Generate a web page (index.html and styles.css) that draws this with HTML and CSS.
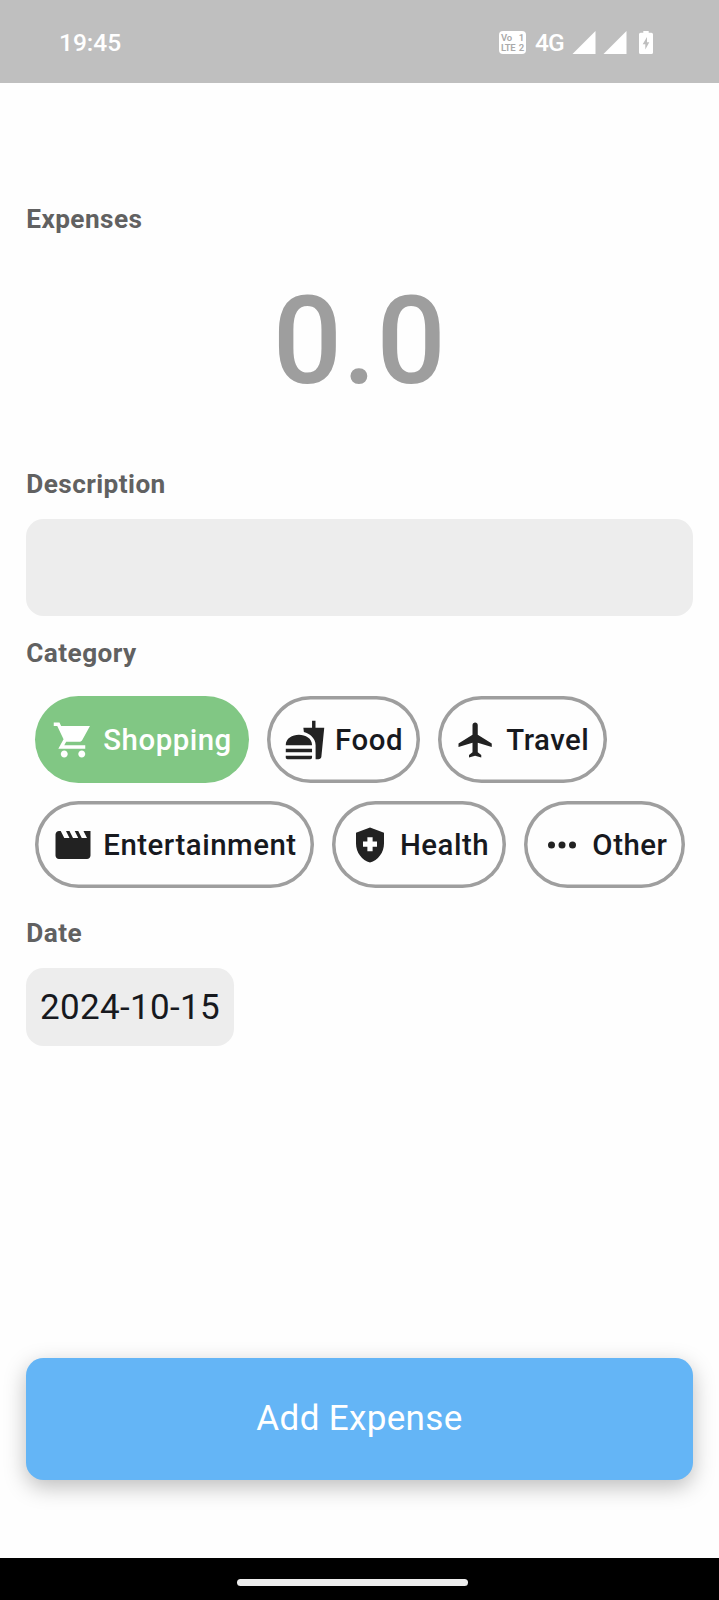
FILE: index.html
```html
<!DOCTYPE html>
<html lang="en">
<head>
<meta charset="utf-8">
<title>Add Expense</title>
<link rel="stylesheet" href="styles.css">
</head>
<body>
<header class="status">
  <span class="clock">19:45</span>
  <div class="indicators">
    <div class="volte"><span>Vo</span><span>1</span><span>LTE</span><span>2</span></div>
    <span class="network">4G</span>
    <svg class="signal" viewBox="0 0 24 24"><path d="M0 24 24 0V24z"/></svg>
    <svg class="signal second" viewBox="0 0 24 24"><path d="M0 24 24 0V24z"/></svg>
    <svg class="battery" viewBox="0 0 14 23"><path fill-rule="evenodd" d="M4.3 0H9.7V1.7H12.4Q14 1.7 14 3.3V21.4Q14 23 12.4 23H1.6Q0 23 0 21.4V3.3Q0 1.7 1.6 1.7H4.3zM8 6 3.7 13.2H6.3V18.6L10.3 11.2H8z"/></svg>
  </div>
</header>
<main class="form">
  <h2 class="label">Expenses</h2>
  <div class="amount">0.0</div>
  <h2 class="label description-label">Description</h2>
  <div class="field"></div>
  <h2 class="label category-label">Category</h2>
  <div class="chips">
    <div class="chip selected"><svg class="icon" viewBox="0 0 24 24"><path d="M7 18c-1.1 0-1.99.9-1.99 2S5.9 22 7 22s2-.9 2-2-.9-2-2-2zM1 2v2h2l3.6 7.59L3.62 17H19v-2H7l1.1-2h7.45c.75 0 1.41-.41 1.75-1.03L21.7 4H5.21l-.94-2H1zm16 16c-1.1 0-1.99.9-1.99 2s.89 2 1.99 2 2-.9 2-2-.9-2-2-2z"/></svg><span>Shopping</span></div>
    <div class="chip"><svg class="icon" viewBox="0 0 24 24"><path d="M18.06 22.99h1.66c.84 0 1.53-.64 1.63-1.46L23 5.05h-5V1h-1.97v4.05h-4.97l.3 2.34c1.71.47 3.31 1.32 4.27 2.26 1.44 1.42 2.43 2.89 2.43 5.29v8.05zM1 21.99V21h15.03v.99c0 .55-.45 1-1.01 1H2.01c-.56 0-1.01-.45-1.01-1zm15.03-7c0-8-15.03-8-15.03 0h15.03zM1.02 17h15v2h-15z"/></svg><span>Food</span></div>
    <div class="chip"><svg class="icon" viewBox="0 0 24 24"><path d="M21 16v-2l-8-5V3.5c0-.83-.67-1.5-1.5-1.5S10 2.67 10 3.5V9l-8 5v2l8-2.5V19l-2 1.5V22l3.5-1 3.5 1v-1.5L13 19v-5.5l8 2.5z"/></svg><span>Travel</span></div>
    <div class="chip"><svg class="icon" viewBox="0 0 24 24"><path d="M18 4l2 4h-3l-2-4h-2l2 4h-3l-2-4H8l2 4H7L5 4H4c-1.1 0-1.99.9-1.99 2L2 18c0 1.1.9 2 2 2h16c1.1 0 2-.9 2-2V4h-4z"/></svg><span>Entertainment</span></div>
    <div class="chip"><svg class="icon" viewBox="0 0 24 24"><path fill-rule="evenodd" d="M12 2L4 5v6.09c0 5.05 3.41 9.76 8 10.91 4.59-1.15 8-5.86 8-10.91V5l-8-3zM10.5 13H8v-3h2.5V7.5h3V10H16v3h-2.5v2.5h-3z"/></svg><span>Health</span></div>
    <div class="chip"><svg class="icon" viewBox="0 0 24 24"><circle cx="6" cy="12" r="2"/><circle cx="12" cy="12" r="2"/><circle cx="18" cy="12" r="2"/></svg><span>Other</span></div>
  </div>
  <h2 class="label date-label">Date</h2>
  <div class="date">2024-10-15</div>
  <button class="submit">Add Expense</button>
</main>
<footer class="nav"><div class="handle"></div></footer>
</body>
</html>
```
FILE: styles.css
```css
* { box-sizing: border-box; }
body {
  margin: 0;
  height: 1600px;
  display: flex;
  flex-direction: column;
  background: #fefefe;
  color: #17191e;
  font-family: Roboto, sans-serif;
}
.status {
  flex: none;
  height: 83.3px;
  padding: 1px 66px 0 59px;
  display: flex;
  align-items: center;
  justify-content: space-between;
  background: #bfbfbf;
  color: #fff;
}
.clock { font-size: 24.5px; font-weight: 500; }
.indicators { display: flex; align-items: center; }
.indicators svg { fill: #fff; }
.volte {
  width: 27px;
  height: 23px;
  padding: 2px 2px 1px;
  display: grid;
  grid-template-columns: 1fr auto;
  grid-template-rows: 10px 10px;
  border-radius: 4px;
  background: #fff;
  color: #aaa;
  font-size: 9.5px;
  font-weight: 600;
  line-height: 10px;
  letter-spacing: -0.3px;
}
.network { margin-left: 9px; width: 29px; font-size: 24.5px; font-weight: 500; letter-spacing: -0.8px; }
.signal { width: 24px; height: 23px; margin-left: 8px; }
.signal.second { margin-left: 7px; }
.battery { width: 14px; height: 23px; margin-left: 12px; }

.form {
  flex: 1;
  padding: 119.7px 26.3px 0;
  display: flex;
  flex-direction: column;
}
.label {
  margin: 0;
  color: #616161;
  font-size: 26.2px;
  font-weight: 700;
  line-height: 32px;
  letter-spacing: 0.42px;
}
.amount {
  height: 210px;
  padding-top: 2px;
  color: #9e9e9e;
  font-size: 122px;
  font-weight: 500;
  line-height: 210px;
  text-align: center;
  letter-spacing: 0.3px;
}
.description-label { margin-top: 23px; }
.field { height: 97px; margin-top: 19px; border-radius: 17.5px; background: #ededed; }
.category-label { margin-top: 21px; }
.chips {
  padding: 0 0 0 8.7px;
  margin-top: 27.3px;
  display: flex;
  flex-wrap: wrap;
  gap: 17.7px;
}
.chip {
  height: 87.2px;
  padding: 0 17.3px;
  display: flex;
  align-items: center;
  gap: 9px;
  border-radius: 44px;
  box-shadow: inset 0 0 0 3.5px #9e9e9e;
  font-size: 29.4px;
  font-weight: 500;
  letter-spacing: 0.52px;
}
.chip.selected { box-shadow: none; background: #81c784; color: #fff; }
.icon { flex: none; width: 42px; height: 42px; fill: #222; }
.selected .icon { fill: #fff; }
.date-label { margin-top: 28.6px; }
.date {
  align-self: flex-start;
  height: 78px;
  margin-top: 19px;
  padding: 1px 13.8px 0;
  border-radius: 17.5px;
  background: #ededed;
  font-size: 35px;
  line-height: 78px;
  letter-spacing: 0.32px;
}
.submit {
  height: 122px;
  margin-top: 312px;
  padding: 0 0 1px;
  border: 0;
  border-radius: 17.5px;
  background: #64b5f6;
  box-shadow: 0 7px 22px rgba(0, 0, 0, 0.26);
  color: #fff;
  font-family: inherit;
  font-size: 35px;
  letter-spacing: 0.35px;
}
.nav {
  flex: none;
  height: 42px;
  padding: 21px 0 0 237.4px;
  background: #000;
}
.handle { width: 230.5px; height: 7px; border-radius: 3.5px; background: #ededed; }
```
